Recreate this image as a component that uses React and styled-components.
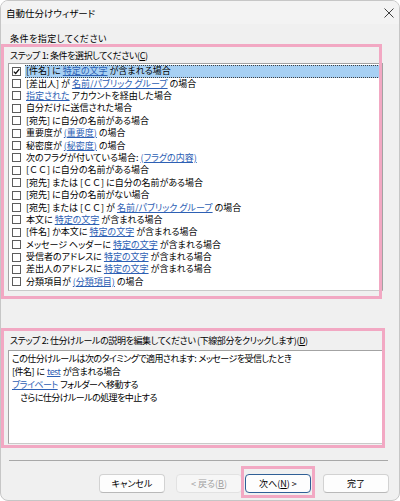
import React from 'react';
import styled, { createGlobalStyle } from 'styled-components';

const GlobalStyle = createGlobalStyle`
    html, body {
        margin: 0;
        padding: 0;
        background: #ffffff;
    }
    body {
        font-family: "Noto Sans CJK JP", "Noto Sans", sans-serif;
    }
`;

const Window = styled.div`
    box-sizing: border-box;
    width: 400px;
    height: 501px;
    border: 1px solid #c6c6c6;
    border-radius: 8px;
    background: #f0f0f0;
    overflow: hidden;
    display: flex;
    flex-direction: column;
    font-family: "Noto Sans CJK JP", "Noto Sans", sans-serif;
    font-size: 9px;
    font-feature-settings: "palt";
    color: #000000;
`;

const TitleBar = styled.div`
    height: 23px;
    flex: none;
    display: flex;
    align-items: center;
    justify-content: space-between;
    padding: 0 5px 0 5px;
    background: #f3f3f3;
    font-size: 9.5px;
`;

const CloseIcon = styled.svg`
    width: 10px;
    height: 10px;
    display: block;
`;

const Heading = styled.div`
    margin: 8px 0 0 9px;
    line-height: 13px;
    letter-spacing: 0.5px;
`;

const Group = styled.div`
    box-sizing: border-box;
    flex: none;
    width: ${props => props.$width}px;
    margin: ${props => props.$top}px 0 0 3px;
    padding: ${props => props.$padTop}px 0 ${props => props.$padBottom}px 0;
    outline: 3px solid #f2a8c3;
`;

const GroupLabel = styled.div`
    line-height: 13px;
    padding-left: 6px;
    white-space: nowrap;
    letter-spacing: -0.4px;
`;

const ListBox = styled.div`
    box-sizing: border-box;
    width: 375px;
    margin: 1.5px -4px 0 4px;
    padding: 1px 0 2px 0;
    border: 1px solid #a3a3a3;
    border-bottom-color: #c9c9c9;
    background: #ffffff;
`;

const Row = styled.div`
    height: 12.4px;
    line-height: 12px;
    display: flex;
    align-items: center;
    padding-left: 3px;
`;

const CheckBox = styled.span`
    box-sizing: border-box;
    flex: none;
    width: 9px;
    height: 9px;
    border: 1px solid #5c5c5c;
    background: #ffffff;
    margin-right: 4px;
    display: flex;
    align-items: center;
    justify-content: center;
`;

const RowText = styled.span`
    box-sizing: border-box;
    flex: 1;
    height: ${props => props.$selected ? '13px' : '100%'};
    margin-right: 2px;
    padding-left: 1px;
    display: flex;
    align-items: center;
    white-space: nowrap;
    background: ${props => props.$selected ? '#a7d0f3' : 'transparent'};
    border: 1px dotted ${props => props.$selected ? '#3f3f3f' : 'transparent'};
    border-left: none;
`;

const Link = styled.span`
    color: #2d60b4;
    text-decoration: underline;
    text-underline-offset: 1px;
`;

const Key = styled.span`
    text-decoration: underline;
`;

const Gap = styled.span`
    white-space: pre;
`;

const Wide = styled.span`
    font-feature-settings: normal;
`;

const DescBox = styled.div`
    box-sizing: border-box;
    width: 375px;
    height: 94px;
    margin: 3.5px -1px 0 4px;
    padding: 1px 3px;
    border: 1px solid #a3a3a3;
    border-bottom-color: #c9c9c9;
    background: #ffffff;
`;

const DescLine = styled.div`
    line-height: 13px;
    white-space: pre;
    letter-spacing: -0.55px;
    word-spacing: 1px;
    padding-left: ${props => props.$indent || 0}px;
`;

const Separator = styled.div`
    flex: none;
    width: 379px;
    height: 1px;
    margin: 15px 0 0 8px;
    background: #a8a8a8;
`;

const ButtonRow = styled.div`
    display: flex;
    align-items: flex-start;
    margin-top: 13px;
    padding-left: 98px;
`;

const Button = styled.div`
    box-sizing: border-box;
    width: 66px;
    height: 19px;
    flex: none;
    display: flex;
    align-items: center;
    justify-content: center;
    border-radius: 4px;
    border: 1px solid ${props => props.$default ? '#2f5f96' : props.$disabled ? '#e2e2e2' : '#d2d2d2'};
    border-bottom-color: ${props => props.$default ? '#2f5f96' : props.$disabled ? '#e2e2e2' : '#b9b9b9'};
    background: ${props => props.$disabled ? '#f6f6f6' : '#fdfdfd'};
    color: ${props => props.$disabled ? '#a2a2a2' : '#000000'};
    margin-right: ${props => props.$gap || 0}px;
`;

const Spotlight = styled.div`
    margin: -5px 11px -2px 2px;
    padding: 5px 1px 2px 1px;
    outline: 3px solid #f2a8c3;
`;

const CC = { wide: 'ＣＣ' };

const conditions = [
    ['[件名] に ', { link: '特定の文字' }, ' が含まれる場合'],
    ['[差出人] が ', { link: '名前/パブリック グループ' }, ' の場合'],
    [{ link: '指定された' }, ' アカウントを経由した場合'],
    ['自分だけに送信された場合'],
    ['[宛先] に自分の名前がある場合'],
    ['重要度が ', { link: '(重要度)' }, ' の場合'],
    ['秘密度が ', { link: '(秘密度)' }, ' の場合'],
    ['次のフラグが付いている場合: ', { link: '(フラグの内容)' }],
    ['[', CC, '] に自分の名前がある場合'],
    ['[宛先] または [', CC, '] に自分の名前がある場合'],
    ['[宛先] に自分の名前がない場合'],
    ['[宛先] または [', CC, '] が ', { link: '名前/パブリック グループ' }, ' の場合'],
    ['本文に ', { link: '特定の文字' }, ' が含まれる場合'],
    ['[件名] か本文に ', { link: '特定の文字' }, ' が含まれる場合'],
    ['メッセージ ヘッダーに ', { link: '特定の文字' }, ' が含まれる場合'],
    ['受信者のアドレスに ', { link: '特定の文字' }, ' が含まれる場合'],
    ['差出人のアドレスに ', { link: '特定の文字' }, ' が含まれる場合'],
    ['分類項目が ', { link: '(分類項目)' }, ' の場合'],
];

function renderParts(parts) {
    return parts.map((p, i) => {
        if (typeof p === 'string') return <Gap key={i}>{p}</Gap>;
        if (p.wide) return <Wide key={i}>{p.wide}</Wide>;
        return <Link key={i}>{p.link}</Link>;
    });
}

function App() {
    return (
        <>
            <GlobalStyle />
            <Window>
                <TitleBar>
                    <span>自動仕分けウィザード</span>
                    <CloseIcon viewBox="0 0 10 10">
                        <path d="M0.5 0.5 L9.5 9.5 M9.5 0.5 L0.5 9.5" stroke="#2b2b2b" strokeWidth="0.9" fill="none" />
                    </CloseIcon>
                </TitleBar>
                <Heading>条件を指定してください</Heading>
                <Group $width={375} $top={2} $padTop={1.5} $padBottom={5}>
                    <GroupLabel>ステップ 1: 条件を選択してください(<Key>C</Key>)</GroupLabel>
                    <ListBox>
                        {conditions.map((c, i) => (
                            <Row key={i}>
                                <CheckBox>
                                    {i === 0 && (
                                        <svg width="7" height="7" viewBox="0 0 7 7">
                                            <path d="M0.8 3.6 L2.7 5.5 L6.3 1.2" stroke="#111" strokeWidth="1.3" fill="none" />
                                        </svg>
                                    )}
                                </CheckBox>
                                <RowText $selected={i === 0}>{renderParts(c)}</RowText>
                            </Row>
                        ))}
                    </ListBox>
                </Group>
                <Group $width={378} $top={35} $padTop={2.5} $padBottom={1}>
                    <GroupLabel>ステップ 2: 仕分けルールの説明を編集してください (下線部分をクリックします)(<Key>D</Key>)</GroupLabel>
                    <DescBox>
                        <DescLine>この仕分けルールは次のタイミングで適用されます: メッセージを受信したとき</DescLine>
                        <DescLine>[件名] に <Link>test</Link> が含まれる場合</DescLine>
                        <DescLine><Link>プライベート</Link> フォルダーへ移動する</DescLine>
                        <DescLine $indent={8}>さらに仕分けルールの処理を中止する</DescLine>
                    </DescBox>
                </Group>
                <Separator />
                <ButtonRow>
                    <Button $gap={11}>キャンセル</Button>
                    <Button $disabled>&lt; 戻る(<Key>B</Key>)</Button>
                    <Spotlight>
                        <Button $default>次へ(<Key>N</Key>) &gt;</Button>
                    </Spotlight>
                    <Button>完了</Button>
                </ButtonRow>
            </Window>
        </>
    );
}

export default App;
